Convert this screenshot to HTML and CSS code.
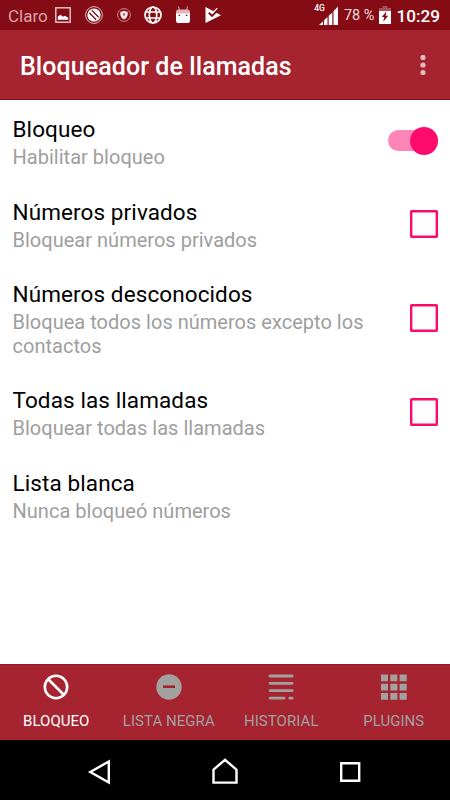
FILE: index.html
```html
<!DOCTYPE html>
<html lang="es">

<head>
    <meta charset="UTF-8">
    <meta name="viewport" content="width=device-width, initial-scale=1.0">
    <title>Bloqueador de llamadas</title>
    <link rel="stylesheet" href="styles.css">
</head>

<body>
    <div class="statusbar">
        <span class="carrier">Claro</span>
        <div class="notifications">
            <svg width="16" height="16" viewBox="0 0 16 16">
                <rect x=".8" y=".8" width="14.4" height="14.4" fill="none" stroke="#e8cdd0" stroke-width="1.4" />
                <path d="M2.8 12.7V9.8L5.5 7.8L8 9.8L10 8.8L13.2 10.8V12.7Z" fill="#fff" />
            </svg>
            <svg width="18" height="18" viewBox="0 0 18 18" fill="none">
                <circle cx="9" cy="9" r="8.4" stroke="#e0b8bc" stroke-width="1" />
                <circle cx="9" cy="9" r="6.6" fill="#fff" />
                <path d="M4.3 6.8L11.2 13.7M6.8 4.3L13.7 11.2" stroke="#850b15" stroke-width="1.3" />
            </svg>
            <svg width="14" height="14" viewBox="0 0 14 14">
                <circle cx="7" cy="7" r="6.4" fill="none" stroke="#c98a90" stroke-width="1" />
                <path d="M3.3 4L7 2.7L10.7 4V7Q10.2 9.9 7 11.5Q3.8 9.9 3.3 7Z" fill="#f8eaec" />
                <path d="M5.9 5.2H8.1V6.8L7 8.6L5.9 6.8Z" fill="#b5626a" />
            </svg>
            <svg width="18" height="18" viewBox="0 0 18 18" fill="none" stroke="#fff" stroke-width="1.7">
                <circle cx="9" cy="9" r="8" />
                <ellipse cx="9" cy="9" rx="3.7" ry="8" />
                <path d="M1.7 6H16.3M1.7 12H16.3" />
            </svg>
            <svg width="14" height="18" viewBox="0 0 14 18">
                <path d="M2.5 .5L3.5 4M11.5 .5L10.5 4" stroke="#dca9ae" stroke-width="1" />
                <path d="M0 8V6Q0 3.5 2 3.5H12Q14 3.5 14 6V8Z" fill="#dfb5b9" />
                <path d="M0 7.5H14V14.5Q14 17 12 17H2Q0 17 0 14.5Z" fill="#fff" />
                <path d="M2.7 9.4H4.2M9.8 9.4H11.3" stroke="#850b15" stroke-width="1.3" />
            </svg>
            <svg class="play" width="16" height="18" viewBox="0 0 16 18">
                <path d="M.5 1L16 9.2L.5 17Z" fill="#fff" />
                <path d="M3.8 6.7L7 9.9L13.8 3.1" fill="none" stroke="#850b15" stroke-width="2" />
                <path d="M8 6.5L12.3 2.2" stroke="#fff" stroke-width="1.2" />
            </svg>
        </div>
        <div class="system">
            <span class="network">4G</span>
            <svg class="signal" width="20" height="19" viewBox="0 0 20 19" fill="#fff">
                <path d="M0 19L4 15.2V19ZM5 14.3L8.5 11V19H5ZM9.7 9.8L13.3 6.4V19H9.7ZM14.5 5.2L19 .5V19H14.5Z" />
            </svg>
            <span class="percent">78 %</span>
            <svg class="battery" width="12" height="18" viewBox="0 0 12 18">
                <path d="M3.5 0H8.5V2H12V5H0V2H3.5Z" fill="#a7525a" />
                <path d="M0 5H12V18H0Z" fill="#fff" />
                <path d="M7.5 5.3L2.8 11H5.3L4.2 15.8L9.2 9.8H6.6Z" fill="#850b15" />
            </svg>
            <span class="clock">10:29</span>
        </div>
    </div>

    <header class="appbar">
        <h1>Bloqueador de llamadas</h1>
        <svg class="more" width="6" height="20" viewBox="0 0 6 20" fill="#e4bdc1">
            <circle cx="3" cy="2.5" r="2.6" />
            <circle cx="3" cy="10" r="2.6" />
            <circle cx="3" cy="17.5" r="2.6" />
        </svg>
    </header>

    <main class="settings">
        <div class="item">
            <div class="item__text">
                <h2>Bloqueo</h2>
                <p>Habilitar bloqueo</p>
            </div>
            <span class="switch"></span>
        </div>
        <div class="item">
            <div class="item__text">
                <h2>Números privados</h2>
                <p>Bloquear números privados</p>
            </div>
            <svg class="checkbox" width="28" height="28" viewBox="0 0 28 28">
                <rect x="1.2" y="1.2" width="25.6" height="25.6" rx=".5" />
            </svg>
        </div>
        <div class="item">
            <div class="item__text">
                <h2>Números desconocidos</h2>
                <p>Bloquea todos los números excepto los contactos</p>
            </div>
            <svg class="checkbox" width="28" height="28" viewBox="0 0 28 28">
                <rect x="1.2" y="1.2" width="25.6" height="25.6" rx=".5" />
            </svg>
        </div>
        <div class="item">
            <div class="item__text">
                <h2>Todas las llamadas</h2>
                <p>Bloquear todas las llamadas</p>
            </div>
            <svg class="checkbox" width="28" height="28" viewBox="0 0 28 28">
                <rect x="1.2" y="1.2" width="25.6" height="25.6" rx=".5" />
            </svg>
        </div>
        <div class="item">
            <div class="item__text">
                <h2>Lista blanca</h2>
                <p>Nunca bloqueó números</p>
            </div>
        </div>
    </main>

    <nav class="tabs">
        <div class="tab active">
            <svg width="26" height="26" viewBox="0 0 26 26" fill="none" stroke="currentColor" stroke-width="2.6">
                <circle cx="13" cy="13" r="11.2" />
                <path d="M5 5L21 21" />
            </svg>
            <span>BLOQUEO</span>
        </div>
        <div class="tab">
            <svg width="26" height="26" viewBox="0 0 26 26">
                <circle cx="13" cy="13" r="12.7" fill="currentColor" />
                <path d="M7 12.7H19" stroke="#a52430" stroke-width="2.6" />
            </svg>
            <span>LISTA NEGRA</span>
        </div>
        <div class="tab">
            <svg width="26" height="26" viewBox="0 0 26 26" fill="none" stroke="currentColor" stroke-width="2.8" stroke-linecap="round">
                <path d="M2 2H24.2M2 9.3H24.2M2 16.6H24.2M2 24.2H16M21.8 24.2H24.2" />
            </svg>
            <span>HISTORIAL</span>
        </div>
        <div class="tab">
            <svg width="26" height="26" viewBox="0 0 26 26" fill="currentColor">
                <path d="M0 .5H7V7.3H0ZM9.3 .5H16.4V7.3H9.3ZM18.6 .5H25.7V7.3H18.6Z" />
                <path d="M0 9.7H7V16.5H0ZM9.3 9.7H16.4V16.5H9.3ZM18.6 9.7H25.7V16.5H18.6Z" />
                <path d="M0 18.9H7V25.7H0ZM9.3 18.9H16.4V25.7H9.3ZM18.6 18.9H25.7V25.7H18.6Z" />
            </svg>
            <span>PLUGINS</span>
        </div>
    </nav>

    <div class="navbar">
        <svg width="26" height="28" viewBox="0 0 26 28">
            <path d="M3.3 14L21.8 3.5V24.5Z" />
        </svg>
        <svg width="26" height="28" viewBox="0 0 26 28">
            <path d="M1.5 11.7L13 1.8L24.5 11.7V24.6H1.5Z" />
        </svg>
        <svg width="26" height="28" viewBox="0 0 26 28">
            <path d="M4.2 5.2H22.2V22.8H4.2Z" />
        </svg>
    </div>
</body>

</html>
```
FILE: styles.css
```css
* {
    margin: 0;
    padding: 0;
    box-sizing: border-box;
}

body {
    height: 100vh;
    display: flex;
    flex-direction: column;
    overflow: hidden;
    background: #fff;
    font-family: Roboto, sans-serif;
}

svg {
    display: block;
    flex: none;
}

.statusbar {
    height: 30px;
    display: flex;
    align-items: center;
    padding: 0 10px 0 8px;
    background: #850b15;
    color: #fff;
    white-space: nowrap;
}

.carrier {
    width: 47px;
    padding-top: 1px;
    font-size: 17px;
    color: #d9a6aa;
}

.notifications {
    display: flex;
    align-items: center;
    gap: 13.8px;
}

.play {
    margin-left: 1px;
}

.system {
    display: flex;
    align-items: center;
    margin-left: auto;
}

.network {
    align-self: flex-start;
    margin-right: -6px;
    font-size: 8.5px;
    font-weight: 500;
    line-height: 6px;
}

.signal {
    margin-top: 1px;
}

.percent {
    margin: 0 5px 0 5px;
    padding-top: 1px;
    font-size: 14.5px;
    color: #f0dcde;
}

.clock {
    margin-left: 5px;
    padding-top: 1px;
    font-size: 17.2px;
    font-weight: 500;
}

.appbar {
    height: 70px;
    display: flex;
    align-items: center;
    justify-content: space-between;
    padding: 3px 24.5px 0 20px;
    background: #a52430;
    border-bottom: 1px solid #8b0c18;
    color: #fff;
}

.appbar h1 {
    padding-top: 1px;
    font-size: 25px;
    font-weight: 500;
    line-height: 30px;
    letter-spacing: .07px;
}

.more {
    margin-top: -3px;
}

.settings {
    flex: 1;
}

.item {
    display: flex;
    align-items: center;
    justify-content: space-between;
    padding: 16px 12.5px 13px;
}

.item__text {
    width: 370px;
}

.item h2 {
    font-size: 22.5px;
    font-weight: 400;
    line-height: 26px;
    letter-spacing: .1px;
    color: #000;
}

.item p {
    margin-top: 4px;
    font-size: 20px;
    line-height: 23.5px;
    letter-spacing: .02px;
    color: #9e9e9e;
}

.switch {
    position: relative;
    width: 50px;
    height: 21px;
    margin-top: -4px;
    border-radius: 11px;
    background: #ff85b6;
}

.switch::after {
    content: "";
    position: absolute;
    top: -3.5px;
    right: 0;
    width: 28px;
    height: 28px;
    border-radius: 50%;
    background: #ff0b6e;
}

.checkbox {
    margin-top: -3.5px;
    fill: none;
    stroke: #fb0a6c;
    stroke-width: 2.4;
}

.tabs {
    height: 76px;
    display: flex;
    background: #a52430;
    border-top: 1px solid #9a1420;
}

.tab {
    flex: 1;
    display: flex;
    flex-direction: column;
    align-items: center;
    padding-top: 9px;
    color: #a3a0a0;
    font-size: 15px;
    line-height: 18px;
    white-space: nowrap;
}

.tab span {
    margin-top: 12px;
    letter-spacing: .05px;
}

.tab.active {
    color: #fff;
}

.navbar {
    height: 60px;
    display: flex;
    justify-content: center;
    align-items: center;
    gap: 99px;
    padding-top: 4px;
    background: #000;
}

.navbar path {
    fill: none;
    stroke: #fff;
    stroke-width: 2.4;
}
```
